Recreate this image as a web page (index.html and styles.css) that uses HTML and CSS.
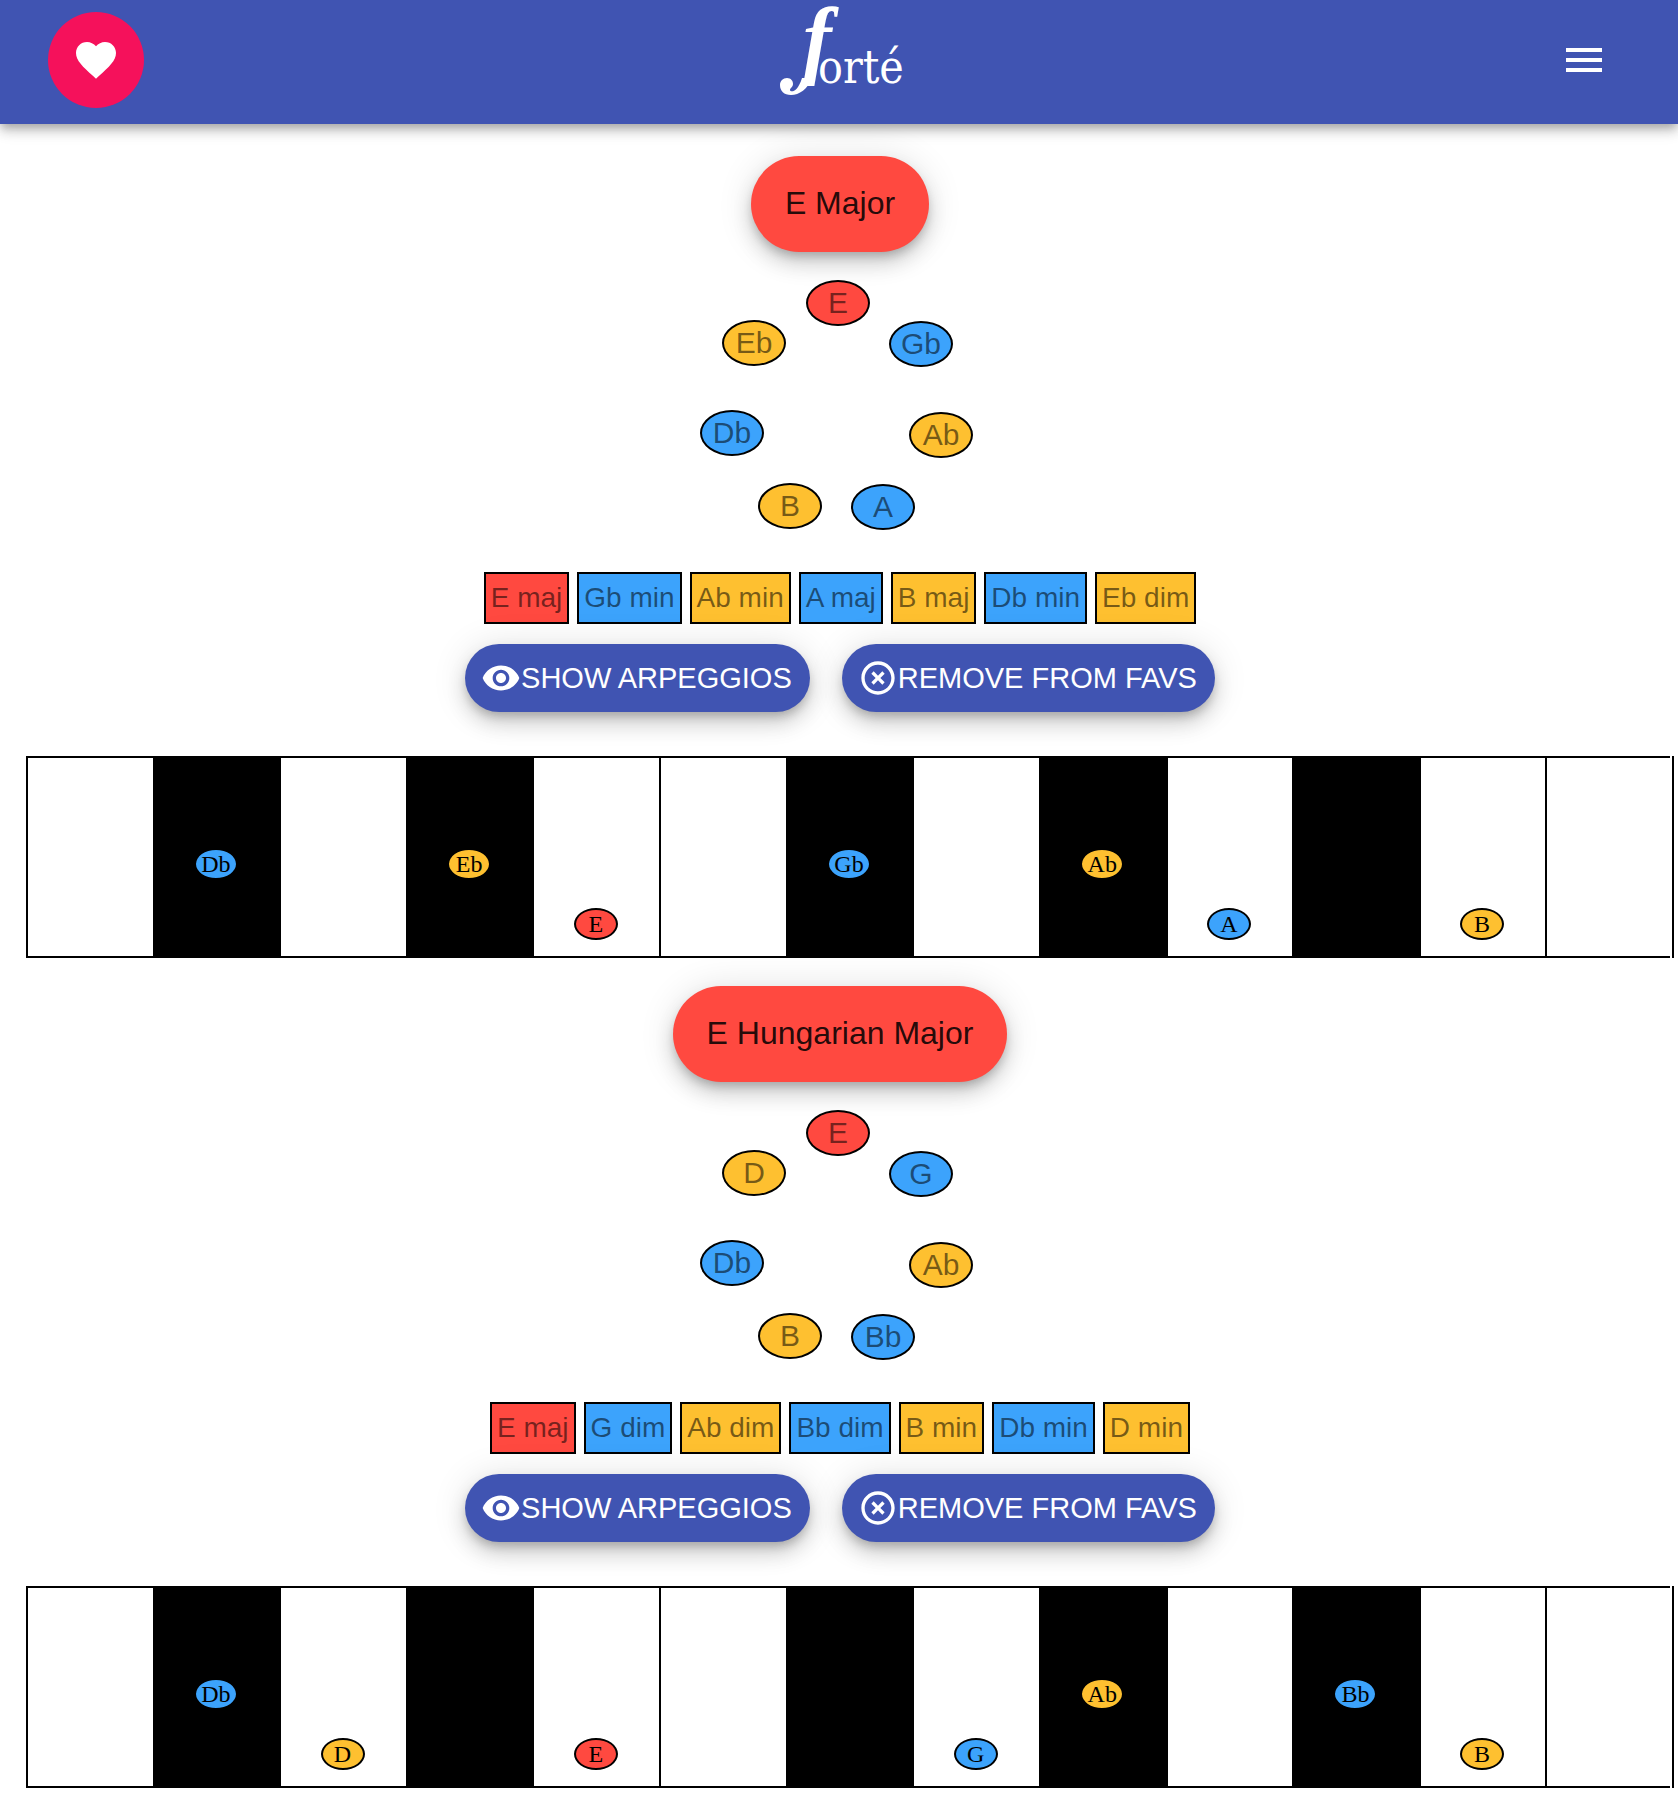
FILE: index.html
```html
<!DOCTYPE html>
<html lang="en">
<head>
<meta charset="utf-8">
<title>Forté</title>
<meta name="viewport" content="width=device-width, initial-scale=1">
<link rel="stylesheet" href="styles.css">
</head>
<body>
<svg class="sprite" aria-hidden="true">
  <symbol id="eye" viewBox="0 0 24 24"><path d="M12 4.5C7 4.5 2.73 7.61 1 12c1.73 4.39 6 7.5 11 7.5s9.270-3.110 11-7.500c-1.730-4.390-6-7.500-11-7.500zM12 17c-2.760 0-5-2.240-5-5s2.240-5 5-5 5 2.240 5 5-2.240 5-5 5zm0-8c-1.660 0-3 1.340-3 3s1.340 3 3 3 3-1.340 3-3-1.340-3-3-3z"/></symbol>
  <symbol id="remove" viewBox="0 0 24 24"><path d="M14.590 8L12 10.590 9.410 8 8 9.410 10.590 12 8 14.590 9.410 16 12 13.410 14.590 16 16 14.590 13.410 12 16 9.410 14.590 8zM12 2C6.470 2 2 6.470 2 12s4.470 10 10 10 10-4.470 10-10S17.530 2 12 2zm0 18c-4.410 0-8-3.590-8-8s3.590-8 8-8 8 3.590 8 8-3.590 8-8 8z"/></symbol>
</svg>

<header class="appbar">
  <button class="fab" type="button" aria-label="Favourites">
    <svg class="icon-lg" viewBox="0 0 24 24"><path d="M12 21.350l-1.450-1.320C5.400 15.360 2 12.280 2 8.500 2 5.420 4.420 3 7.500 3c1.740 0 3.410.810 4.500 2.090C13.090 3.810 14.760 3 16.500 3 19.580 3 22 5.420 22 8.500c0 3.780-3.400 6.860-8.550 11.540L12 21.350z"/></svg>
  </button>
  <a class="logo" href="#" aria-label="Forté"><svg class="flourish" viewBox="0 0 40 96" aria-hidden="true"><path d="M33 78C29 89 20 95 12 95 5 95 1 91 1 85c0-4 3-7 7-7s6 3 6 6-3 4-3 6 7 4 12-12z"/></svg><span class="logo-f">f</span><span class="logo-rest">orté</span></a>
  <button class="menu" type="button" aria-label="Menu">
    <svg class="icon-lg" viewBox="0 0 24 24"><path d="M3 18h18v-2H3v2zm0-5h18v-2H3v2zm0-7v2h18V6H3z"/></svg>
  </button>
</header>

<main>
  <section class="scale">
    <h2 class="pill">E Major</h2>
    <ul class="ring">
      <li class="note root">E</li>
      <li class="note blue">Gb</li>
      <li class="note gold">Ab</li>
      <li class="note blue">A</li>
      <li class="note gold">B</li>
      <li class="note blue">Db</li>
      <li class="note gold">Eb</li>
    </ul>
    <ul class="chords">
      <li class="chord root">E maj</li>
      <li class="chord blue">Gb min</li>
      <li class="chord gold">Ab min</li>
      <li class="chord blue">A maj</li>
      <li class="chord gold">B maj</li>
      <li class="chord blue">Db min</li>
      <li class="chord gold">Eb dim</li>
    </ul>
    <div class="actions">
      <button class="action" type="button"><svg class="icon"><use href="#eye"/></svg>SHOW ARPEGGIOS</button>
      <button class="action" type="button"><svg class="icon"><use href="#remove"/></svg>REMOVE FROM FAVS</button>
    </div>
    <div class="piano">
      <div class="key"></div>
      <div class="key black"><span class="dot blue">Db</span></div>
      <div class="key"></div>
      <div class="key black"><span class="dot gold">Eb</span></div>
      <div class="key"><span class="dot root">E</span></div>
      <div class="key"></div>
      <div class="key black"><span class="dot blue">Gb</span></div>
      <div class="key"></div>
      <div class="key black"><span class="dot gold">Ab</span></div>
      <div class="key"><span class="dot blue">A</span></div>
      <div class="key black"></div>
      <div class="key"><span class="dot gold">B</span></div>
      <div class="key"></div>
    </div>
  </section>

  <section class="scale">
    <h2 class="pill">E Hungarian Major</h2>
    <ul class="ring">
      <li class="note root">E</li>
      <li class="note blue">G</li>
      <li class="note gold">Ab</li>
      <li class="note blue">Bb</li>
      <li class="note gold">B</li>
      <li class="note blue">Db</li>
      <li class="note gold">D</li>
    </ul>
    <ul class="chords">
      <li class="chord root">E maj</li>
      <li class="chord blue">G dim</li>
      <li class="chord gold">Ab dim</li>
      <li class="chord blue">Bb dim</li>
      <li class="chord gold">B min</li>
      <li class="chord blue">Db min</li>
      <li class="chord gold">D min</li>
    </ul>
    <div class="actions">
      <button class="action" type="button"><svg class="icon"><use href="#eye"/></svg>SHOW ARPEGGIOS</button>
      <button class="action" type="button"><svg class="icon"><use href="#remove"/></svg>REMOVE FROM FAVS</button>
    </div>
    <div class="piano">
      <div class="key"></div>
      <div class="key black"><span class="dot blue">Db</span></div>
      <div class="key"><span class="dot gold">D</span></div>
      <div class="key black"></div>
      <div class="key"><span class="dot root">E</span></div>
      <div class="key"></div>
      <div class="key black"></div>
      <div class="key"><span class="dot blue">G</span></div>
      <div class="key black"><span class="dot gold">Ab</span></div>
      <div class="key"></div>
      <div class="key black"><span class="dot blue">Bb</span></div>
      <div class="key"><span class="dot gold">B</span></div>
      <div class="key"></div>
    </div>
  </section>
</main>
</body>
</html>
```
FILE: styles.css
```css
:root {
  --indigo: #4054b2;
  --pink: #f5115b;
  --red: #ff4940;
  --blue: #3ca3fc;
  --gold: #fec030;
  --raised: 0 6px 10px -2px rgba(0, 0, 0, 0.2), 0 12px 20px rgba(0, 0, 0, 0.14), 0 2px 36px rgba(0, 0, 0, 0.12);
}

* { box-sizing: border-box; }

body {
  margin: 0;
  background: #fff;
  font-family: "Liberation Sans", Arial, sans-serif;
}

ul {
  margin: 0;
  padding: 0;
  list-style: none;
}

button {
  border: 0;
  padding: 0;
  font: inherit;
  color: #fff;
  cursor: pointer;
}

svg { display: block; fill: currentColor; }

.sprite { display: none; }

.root { background: var(--red); }
.blue { background: var(--blue); }
.gold { background: var(--gold); }

/* App bar */
.appbar {
  display: grid;
  grid-template-columns: 1fr auto 1fr;
  align-items: start;
  height: 124px;
  padding: 0 48px;
  background: var(--indigo);
  color: #fff;
  box-shadow: 0 4px 8px -2px rgba(0, 0, 0, 0.2), 0 8px 10px rgba(0, 0, 0, 0.14), 0 2px 20px rgba(0, 0, 0, 0.12);
}

.fab {
  display: grid;
  place-items: center;
  width: 96px;
  height: 96px;
  margin-top: 12px;
  border-radius: 50%;
  background: var(--pink);
}

.menu {
  justify-self: end;
  margin-top: 12px;
  padding: 24px 22px;
  background: none;
}

.icon-lg { width: 48px; height: 48px; }

.logo {
  position: relative;
  display: flex;
  align-items: flex-start;
  width: 120px;
  padding-left: 24px;
  color: #fff;
  text-decoration: none;
}

.flourish {
  position: absolute;
  top: 0;
  left: 0;
  width: 40px;
  height: 96px;
}

.logo-f {
  width: 15px;
  font: italic bold 86px/76px "Liberation Serif", "Times New Roman", serif;
}

.logo-rest {
  padding-top: 44px;
  font: 46px/46px "DejaVu Serif Condensed", "Liberation Serif", serif;
}

/* Scale card */
.scale {
  display: flex;
  flex-direction: column;
  align-items: center;
}

main {
  display: flex;
  flex-direction: column;
  gap: 28px;
  padding: 32px 0 16px 2px;
}

.pill {
  margin: 0 0 28px;
  padding: 0 34px 2px;
  border-radius: 48px;
  background: var(--red);
  box-shadow: var(--raised);
  color: rgba(0, 0, 0, 0.87);
  font-size: 32px;
  font-weight: 400;
  line-height: 94px;
}

.ring {
  position: relative;
  width: 282px;
  height: 292px;
}

.note {
  position: absolute;
  width: 64px;
  height: 46px;
  border: 2px solid #000;
  border-radius: 50%;
  color: rgba(0, 0, 0, 0.54);
  font-size: 30px;
  line-height: 42px;
  text-align: center;
}

.note:nth-child(1) { left: 107px; top: 0; }
.note:nth-child(2) { left: 190px; top: 41px; }
.note:nth-child(3) { left: 210px; top: 132px; }
.note:nth-child(4) { left: 152px; top: 204px; }
.note:nth-child(5) { left: 59px; top: 203px; }
.note:nth-child(6) { left: 1px; top: 130px; }
.note:nth-child(7) { left: 23px; top: 40px; }

.chords {
  display: flex;
  gap: 8px;
  margin-bottom: 20px;
}

.chord {
  height: 52px;
  padding: 0 5px;
  border: 2px solid #000;
  color: rgba(0, 0, 0, 0.54);
  font-size: 28px;
  line-height: 48px;
}

.actions {
  display: flex;
  gap: 32px;
  margin-bottom: 44px;
}

.action {
  display: flex;
  align-items: center;
  height: 68px;
  padding: 0 18px 0 16px;
  border-radius: 34px;
  background: var(--indigo);
  box-shadow: var(--raised);
  font-size: 29px;
  white-space: nowrap;
}

.icon { width: 40px; height: 40px; }

/* Keyboard */
.piano {
  display: grid;
  grid-template-columns: repeat(13, 1fr);
  align-self: stretch;
  height: 202px;
  margin: 0 4px 0 24px;
  border-right: 2px solid #000;
}

.key {
  display: flex;
  justify-content: center;
  align-items: flex-end;
  padding: 0 2px 16px 0;
  border: solid #000;
  border-width: 2px 0 2px 2px;
  background: #fff;
}

.key:last-child { margin-right: 2px; }

.key.black {
  padding-bottom: 76px;
  background: #000;
}

.dot {
  width: 44px;
  height: 32px;
  border: 2px solid #000;
  border-radius: 50%;
  font-family: "Liberation Serif", "Times New Roman", serif;
  font-size: 24px;
  line-height: 28px;
  text-align: center;
}
```
